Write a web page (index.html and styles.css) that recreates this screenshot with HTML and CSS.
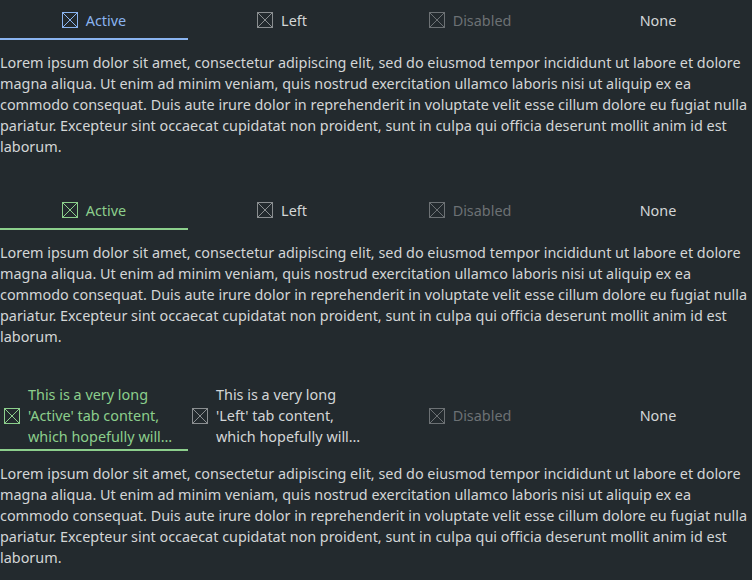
FILE: index.html
```html
<!DOCTYPE html>
<html>
<head>
<meta charset="utf-8">
<link rel="stylesheet" href="styles.css">
</head>
<body>
<div class="page">
  <section class="section">
    <div class="tabbar">
      <div class="tab active blue">
        <svg class="ico" viewBox="0 0 16 16"><rect x="0.5" y="0.5" width="15" height="15"/><path d="M1 1L15 15M15 1L1 15"/></svg>
        <span class="label">Active</span>
      </div>
      <div class="tab normal">
        <svg class="ico" viewBox="0 0 16 16"><rect x="0.5" y="0.5" width="15" height="15"/><path d="M1 1L15 15M15 1L1 15"/></svg>
        <span class="label">Left</span>
      </div>
      <div class="tab disabled">
        <svg class="ico" viewBox="0 0 16 16"><rect x="0.5" y="0.5" width="15" height="15"/><path d="M1 1L15 15M15 1L1 15"/></svg>
        <span class="label">Disabled</span>
      </div>
      <div class="tab normal">
        <span class="label">None</span>
      </div>
    </div>
    <p class="text">Lorem ipsum dolor sit amet, consectetur adipiscing elit, sed do eiusmod tempor incididunt ut labore et dolore magna aliqua. Ut enim ad minim veniam, quis nostrud exercitation ullamco laboris nisi ut aliquip ex ea commodo consequat. Duis aute irure dolor in reprehenderit in voluptate velit esse cillum dolore eu fugiat nulla pariatur. Excepteur sint occaecat cupidatat non proident, sunt in culpa qui officia deserunt mollit anim id est laborum.</p>
  </section>

  <section class="section">
    <div class="tabbar">
      <div class="tab active green">
        <svg class="ico" viewBox="0 0 16 16"><rect x="0.5" y="0.5" width="15" height="15"/><path d="M1 1L15 15M15 1L1 15"/></svg>
        <span class="label">Active</span>
      </div>
      <div class="tab normal">
        <svg class="ico" viewBox="0 0 16 16"><rect x="0.5" y="0.5" width="15" height="15"/><path d="M1 1L15 15M15 1L1 15"/></svg>
        <span class="label">Left</span>
      </div>
      <div class="tab disabled">
        <svg class="ico" viewBox="0 0 16 16"><rect x="0.5" y="0.5" width="15" height="15"/><path d="M1 1L15 15M15 1L1 15"/></svg>
        <span class="label">Disabled</span>
      </div>
      <div class="tab normal">
        <span class="label">None</span>
      </div>
    </div>
    <p class="text">Lorem ipsum dolor sit amet, consectetur adipiscing elit, sed do eiusmod tempor incididunt ut labore et dolore magna aliqua. Ut enim ad minim veniam, quis nostrud exercitation ullamco laboris nisi ut aliquip ex ea commodo consequat. Duis aute irure dolor in reprehenderit in voluptate velit esse cillum dolore eu fugiat nulla pariatur. Excepteur sint occaecat cupidatat non proident, sunt in culpa qui officia deserunt mollit anim id est laborum.</p>
  </section>

  <section class="section">
    <div class="tabbar">
      <div class="tab active green">
        <svg class="ico" viewBox="0 0 16 16"><rect x="0.5" y="0.5" width="15" height="15"/><path d="M1 1L15 15M15 1L1 15"/></svg>
        <span class="label long">This is a very long 'Active' tab content, which hopefully will…</span>
      </div>
      <div class="tab normal">
        <svg class="ico" viewBox="0 0 16 16"><rect x="0.5" y="0.5" width="15" height="15"/><path d="M1 1L15 15M15 1L1 15"/></svg>
        <span class="label long">This is a very long 'Left' tab content, which hopefully will…</span>
      </div>
      <div class="tab disabled">
        <svg class="ico" viewBox="0 0 16 16"><rect x="0.5" y="0.5" width="15" height="15"/><path d="M1 1L15 15M15 1L1 15"/></svg>
        <span class="label">Disabled</span>
      </div>
      <div class="tab normal">
        <span class="label">None</span>
      </div>
    </div>
    <p class="text">Lorem ipsum dolor sit amet, consectetur adipiscing elit, sed do eiusmod tempor incididunt ut labore et dolore magna aliqua. Ut enim ad minim veniam, quis nostrud exercitation ullamco laboris nisi ut aliquip ex ea commodo consequat. Duis aute irure dolor in reprehenderit in voluptate velit esse cillum dolore eu fugiat nulla pariatur. Excepteur sint occaecat cupidatat non proident, sunt in culpa qui officia deserunt mollit anim id est laborum.</p>
  </section>
</div>
</body>
</html>
```

FILE: styles.css
```css
html, body {
  margin: 0;
  padding: 0;
  background: #232a2e;
}
body {
  font-family: "Noto Sans", "Open Sans", sans-serif;
  font-size: 14.4px;
  line-height: 21px;
  color: #d3d6d7;
}
.page {
  display: flex;
  flex-direction: column;
  gap: 33px;
}
.tabbar {
  display: grid;
  grid-template-columns: repeat(4, 1fr);
}
.tab {
  box-sizing: border-box;
  min-height: 40px;
  padding: 4px 4px 2px;
  border-bottom: 2px solid transparent;
  display: flex;
  align-items: center;
  justify-content: center;
  gap: 8px;
}
.ico {
  width: 16px;
  height: 16px;
  flex: none;
  fill: none;
  stroke: currentColor;
  stroke-width: 1;
}
.label {
  min-width: 0;
}
.long {
  flex: 1 1 auto;
  margin-right: 4px;
}
.tab.blue {
  color: #8ab4f0;
  border-bottom-color: #8ab4f0;
}
.tab.green {
  color: #8ccf8c;
  border-bottom-color: #8ccf8c;
}
.tab.normal {
  color: #d3d6d7;
}
.tab.normal .ico {
  color: #8a8e90;
}
.tab.disabled {
  color: #6c7174;
}
.text {
  margin: 12px 0 0;
}
```
